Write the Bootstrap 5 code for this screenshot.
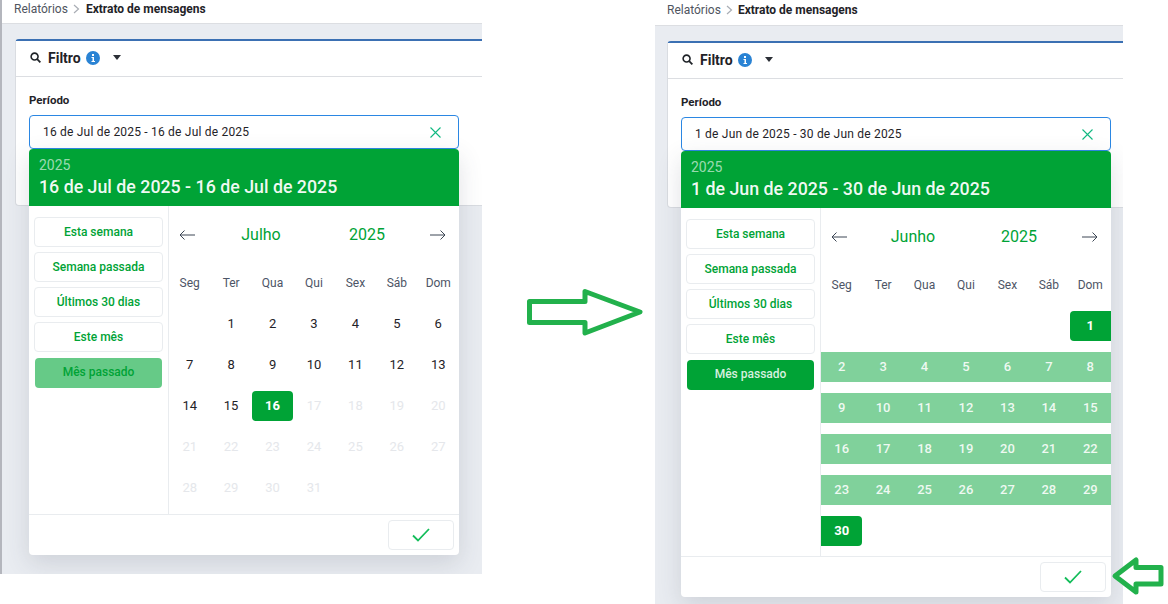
<!DOCTYPE html>
<html lang="pt-BR">
<head>
<meta charset="utf-8">
<title>Extrato de mensagens</title>
<link href="https://cdn.jsdelivr.net/npm/bootstrap@5.3.0/dist/css/bootstrap.min.css" rel="stylesheet">
<style>
html,body{height:100%;margin:0;background:#fff;overflow:hidden}
body{font-family:Roboto,"Liberation Sans",sans-serif;font-size:12px;color:#1f2328}
.stage{position:relative;width:1168px;height:604px;overflow:hidden}
.shot{position:absolute;top:0;background:#e9ecf1;overflow:hidden}
.shot-a{left:0;width:482px;height:574px;border-left:2px solid #b4b6bd}
.shot-b{left:655px;width:468px;height:604px}
.topbar{background:#fff;border-bottom:1px solid #dcdee2;display:flex;align-items:center;gap:5px;font-size:12px;line-height:14px}
.shot-a .topbar{height:24px;padding:0 0 5px 12px}
.shot-b .topbar{height:26px;padding:0 0 5px 12px}
.crumb-a{color:#4f5560}
.crumb-b{color:#1f2328;font-weight:700}
.shot-a .crumb-b{margin-left:1px}
.crumb-sep{width:7px;height:10px;flex:none}
.filter-card{width:500px;margin-top:15px;border:1px solid #d9dce1;border-top:2px solid #3b70b3;border-radius:4px;background:#fff;height:167px}
.shot-a .filter-card{margin-left:13px}
.shot-b .filter-card{margin-left:12px}
.filter-head{height:36px;padding:0 14px 2px;border-bottom:1px solid #dcdee2;display:flex;align-items:center;background:#fff;border-radius:0}
.filter-title{font-size:14px;font-weight:700;margin:0 5px 0 7px;line-height:16px;color:#1f2328}
.head-caret{margin-left:12px}
.filter-body{padding:16px 13px 0}
.period-label{font-size:11.5px;font-weight:700;line-height:14px;margin:0 0 8px;color:#1f2328;display:block}
.date-wrap{position:relative;width:430px}
.date-box{height:34px;border:1px solid #2b87e3;border-radius:4px;display:flex;align-items:center;justify-content:space-between;padding:0 17px 0 13px;font-size:12px;letter-spacing:.2px;color:#1f2328}
.date-clear{flex:none;display:block}
.picker{position:absolute;left:0;top:100%;width:430px;background:#fff;border-radius:4px;box-shadow:0 8px 24px rgba(60,70,90,.16)}
.picker-head{background:#00a336;height:57px;border-radius:4px 4px 0 0;padding:8px 10px 0;color:#fff}
.picker-year{font-size:14px;line-height:16px;color:rgba(255,255,255,.62)}
.picker-range{font-size:17.8px;line-height:21px;font-weight:500;margin-top:3px;color:rgba(255,255,255,.94)}
.picker-main{display:flex}
.preset-col{width:140px;flex:none;border-right:1px solid #e9ecef;padding:11px 5px 0;display:flex;flex-direction:column;gap:5px}
.preset{height:30px;padding:0;border:1px solid #e9ecef;border-radius:4px;background:#fff;color:#00a336;font-size:12px;font-weight:500;line-height:26px;text-align:center}
.preset-on-soft,.preset-on{margin:1px;height:30px;border:0;padding-bottom:2px;line-height:27px}
.preset-on-soft{background:#66ca87}
.preset-on{background:#00a336;color:rgba(255,255,255,.85)}
.cal{width:290px;flex:none;padding-top:14px}
.shot-a .cal{padding-bottom:11px}
.shot-b .cal{padding-bottom:10px}
.cal-nav{height:30px;display:flex;align-items:center;padding:0 13px 0 10px;color:#00a336;font-size:16px}
.cal-arrow{width:17px;height:10px;flex:none}
.cal-month{width:114px;text-align:center;margin-left:8px;flex:none}
.cal-year{width:54px;text-align:center;flex:none;margin-left:22px;margin-right:auto}
.wk{display:grid;grid-template-columns:repeat(7,1fr);margin-top:23px;height:20px;line-height:20px;text-align:center;color:#4d5566;font-size:12px}
.days{display:grid;grid-template-columns:repeat(7,1fr);grid-auto-rows:30px;row-gap:11px;margin-top:16px;text-align:center;font-size:13px;line-height:30px;color:#1f2328}
.off{color:#e5e7eb}
.sel{background:#00a336;color:#fff;font-weight:700;border-radius:4px}
.sel-start{border-radius:4px 0 0 4px}
.sel-end{border-radius:0 4px 4px 0}
.mid{background:#80d19b;color:rgba(255,255,255,.88);font-weight:500}
.picker-foot{height:41px;border-top:1px solid #e9ecef;padding:5px 5px 0;display:flex;justify-content:flex-end}
.ok{width:66px;height:30px;border:1px solid #e9ecef;border-radius:4px;background:#fff;padding:0;display:flex;align-items:center;justify-content:center}
.note-arrow{position:absolute;left:0;top:0;pointer-events:none}
</style>
</head>
<body>
<div class="stage">

<div class="shot shot-a">
  <nav class="topbar"><span class="crumb-a">Relatórios</span><svg class="crumb-sep" viewBox="0 0 7 10"><path d="M1 1l4.500 4-4.500 4" fill="none" stroke="#a9adb4" stroke-width="1.200"/></svg><span class="crumb-b">Extrato de mensagens</span></nav>
  <section class="filter-card">
    <header class="filter-head">
      <svg width="11" height="11" viewBox="0 0 12 12"><circle cx="5" cy="5" r="3.800" fill="none" stroke="#1f2328" stroke-width="1.700"/><path d="M7.800 7.800l3.500 3.500" stroke="#1f2328" stroke-width="2"/></svg>
      <span class="filter-title">Filtro</span>
      <svg width="14" height="14" viewBox="0 0 14 14"><circle cx="7" cy="7" r="7" fill="#2a83d4"/><rect x="6" y="3" width="2" height="2" fill="#fff"/><path d="M5.500 6h2.500v4h1v1H5.500v-1h1V7h-1z" fill="#fff"/></svg>
      <svg class="head-caret" width="10" height="6" viewBox="0 0 10 6"><path d="M1 0h8L5 5z" fill="#2b2f36"/></svg>
    </header>
    <div class="filter-body">
      <label class="period-label">Período</label>
      <div class="date-wrap">
        <div class="date-box"><span>16 de Jul de 2025 - 16 de Jul de 2025</span><svg class="date-clear" width="11" height="11" viewBox="0 0 11 11"><path d="M.5.500l10 10M10.500.500l-10 10" fill="none" stroke="#10b981" stroke-width="1.100"/></svg></div>
        <div class="picker">
          <div class="picker-head"><div class="picker-year">2025</div><div class="picker-range">16 de Jul de 2025 - 16 de Jul de 2025</div></div>
          <div class="picker-main">
            <div class="preset-col">
              <button class="btn preset">Esta semana</button>
              <button class="btn preset">Semana passada</button>
              <button class="btn preset">Últimos 30 dias</button>
              <button class="btn preset">Este mês</button>
              <button class="btn preset preset-on-soft">Mês passado</button>
            </div>
            <div class="cal">
              <div class="cal-nav">
                <svg class="cal-arrow" viewBox="0 0 17 10"><path d="M16 5H1M5.500 .500L1 5l4.500 4.500" fill="none" stroke="#3c4654" stroke-width="1"/></svg>
                <span class="cal-month">Julho</span><span class="cal-year">2025</span>
                <svg class="cal-arrow" viewBox="0 0 17 10"><path d="M1 5h15M11.500 .500L16 5l-4.500 4.500" fill="none" stroke="#3c4654" stroke-width="1"/></svg>
              </div>
              <div class="wk"><span>Seg</span><span>Ter</span><span>Qua</span><span>Qui</span><span>Sex</span><span>Sáb</span><span>Dom</span></div>
              <div class="days">
                <span></span><span>1</span><span>2</span><span>3</span><span>4</span><span>5</span><span>6</span>
                <span>7</span><span>8</span><span>9</span><span>10</span><span>11</span><span>12</span><span>13</span>
                <span>14</span><span>15</span><span class="sel">16</span><span class="off">17</span><span class="off">18</span><span class="off">19</span><span class="off">20</span>
                <span class="off">21</span><span class="off">22</span><span class="off">23</span><span class="off">24</span><span class="off">25</span><span class="off">26</span><span class="off">27</span>
                <span class="off">28</span><span class="off">29</span><span class="off">30</span><span class="off">31</span>
              </div>
            </div>
          </div>
          <div class="picker-foot"><button class="btn ok"><svg width="18" height="14" viewBox="0 0 18 14"><path d="M1 7.500l5 5L17 1" fill="none" stroke="#13bd5a" stroke-width="1.800"/></svg></button></div>
        </div>
      </div>
    </div>
  </section>
</div>

<div class="shot shot-b">
  <nav class="topbar"><span class="crumb-a">Relatórios</span><svg class="crumb-sep" viewBox="0 0 7 10"><path d="M1 1l4.500 4-4.500 4" fill="none" stroke="#a9adb4" stroke-width="1.200"/></svg><span class="crumb-b">Extrato de mensagens</span></nav>
  <section class="filter-card">
    <header class="filter-head">
      <svg width="11" height="11" viewBox="0 0 12 12"><circle cx="5" cy="5" r="3.800" fill="none" stroke="#1f2328" stroke-width="1.700"/><path d="M7.800 7.800l3.500 3.500" stroke="#1f2328" stroke-width="2"/></svg>
      <span class="filter-title">Filtro</span>
      <svg width="14" height="14" viewBox="0 0 14 14"><circle cx="7" cy="7" r="7" fill="#2a83d4"/><rect x="6" y="3" width="2" height="2" fill="#fff"/><path d="M5.500 6h2.500v4h1v1H5.500v-1h1V7h-1z" fill="#fff"/></svg>
      <svg class="head-caret" width="10" height="6" viewBox="0 0 10 6"><path d="M1 0h8L5 5z" fill="#2b2f36"/></svg>
    </header>
    <div class="filter-body">
      <label class="period-label">Período</label>
      <div class="date-wrap">
        <div class="date-box"><span>1 de Jun de 2025 - 30 de Jun de 2025</span><svg class="date-clear" width="11" height="11" viewBox="0 0 11 11"><path d="M.5.500l10 10M10.500.500l-10 10" fill="none" stroke="#10b981" stroke-width="1.100"/></svg></div>
        <div class="picker">
          <div class="picker-head"><div class="picker-year">2025</div><div class="picker-range">1 de Jun de 2025 - 30 de Jun de 2025</div></div>
          <div class="picker-main">
            <div class="preset-col">
              <button class="btn preset">Esta semana</button>
              <button class="btn preset">Semana passada</button>
              <button class="btn preset">Últimos 30 dias</button>
              <button class="btn preset">Este mês</button>
              <button class="btn preset preset-on">Mês passado</button>
            </div>
            <div class="cal">
              <div class="cal-nav">
                <svg class="cal-arrow" viewBox="0 0 17 10"><path d="M16 5H1M5.500 .500L1 5l4.500 4.500" fill="none" stroke="#3c4654" stroke-width="1"/></svg>
                <span class="cal-month">Junho</span><span class="cal-year">2025</span>
                <svg class="cal-arrow" viewBox="0 0 17 10"><path d="M1 5h15M11.500 .500L16 5l-4.500 4.500" fill="none" stroke="#3c4654" stroke-width="1"/></svg>
              </div>
              <div class="wk"><span>Seg</span><span>Ter</span><span>Qua</span><span>Qui</span><span>Sex</span><span>Sáb</span><span>Dom</span></div>
              <div class="days">
                <span></span><span></span><span></span><span></span><span></span><span></span><span class="sel sel-start">1</span>
                <span class="mid">2</span><span class="mid">3</span><span class="mid">4</span><span class="mid">5</span><span class="mid">6</span><span class="mid">7</span><span class="mid">8</span>
                <span class="mid">9</span><span class="mid">10</span><span class="mid">11</span><span class="mid">12</span><span class="mid">13</span><span class="mid">14</span><span class="mid">15</span>
                <span class="mid">16</span><span class="mid">17</span><span class="mid">18</span><span class="mid">19</span><span class="mid">20</span><span class="mid">21</span><span class="mid">22</span>
                <span class="mid">23</span><span class="mid">24</span><span class="mid">25</span><span class="mid">26</span><span class="mid">27</span><span class="mid">28</span><span class="mid">29</span>
                <span class="sel sel-end">30</span>
              </div>
            </div>
          </div>
          <div class="picker-foot"><button class="btn ok"><svg width="18" height="14" viewBox="0 0 18 14"><path d="M1 7.500l5 5L17 1" fill="none" stroke="#13bd5a" stroke-width="1.800"/></svg></button></div>
        </div>
      </div>
    </div>
  </section>
</div>

<svg class="note-arrow" width="1168" height="604" viewBox="0 0 1168 604">
  <polygon points="529.500,301.500 585,301.500 585,291.500 640,312 585,333 585,322.500 529.500,322.500" fill="#fff" stroke="#22b14c" stroke-width="5" stroke-linejoin="round"/>
  <polygon points="1115,576 1136,560 1136,567.500 1161,567.500 1161,584 1136,584 1136,592" fill="#fff" stroke="#22b14c" stroke-width="5" stroke-linejoin="round"/>
</svg>
</div>
<script src="https://cdn.jsdelivr.net/npm/bootstrap@5.3.0/dist/js/bootstrap.bundle.min.js"></script>
</body>
</html>
